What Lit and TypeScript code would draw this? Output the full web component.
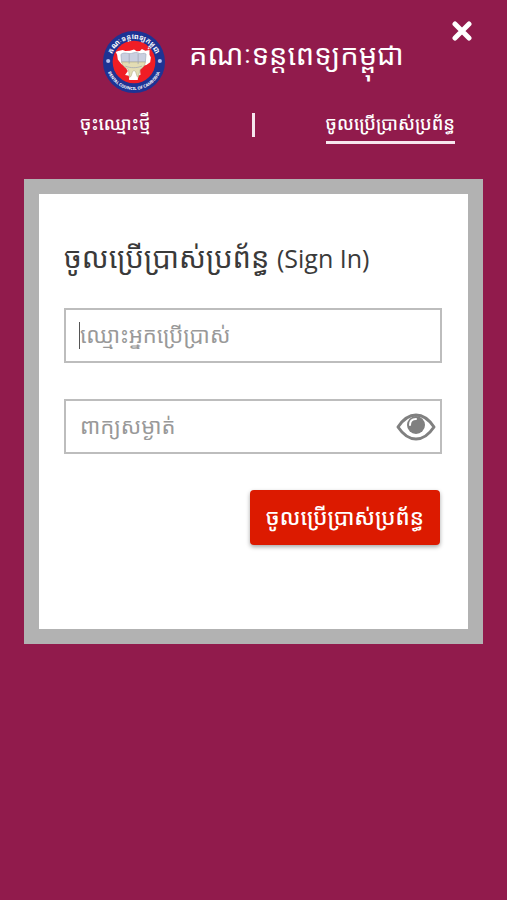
import { LitElement, html, css } from "lit";
import { customElement, state } from "lit/decorators.js";

@customElement("council-seal")
export class CouncilSeal extends LitElement {
  static styles = css`
    :host { display: block; flex: none; width: 62px; height: 62px; }
    svg { display: block; width: 100%; height: 100%; }
    text { font-family: "Noto Sans Khmer", "Noto Sans", "DejaVu Sans", sans-serif; font-weight: 700; fill: #fff; }
    .top { font-size: 21px; }
    .bottom { font-size: 12px; }
  `;
  render() {
    return html`<svg viewBox="0 0 180 180" role="img" aria-label="Dental Council of Cambodia">
      <defs>
        <path id="upper" d="M23 90a67 67 0 0 1 134 0" />
        <path id="lower" d="M9 90a81 81 0 0 0 162 0" />
      </defs>
      <circle cx="90" cy="90" r="90" fill="#1d3394" />
      <circle cx="90" cy="90" r="62" fill="#f01d25" />
      <path fill="#fff" d="M44 58l13-3 8 3 13-1 12-3 8 5 9-1 6-6 10 5 12-2v14l4 8-2 14-11 8-12 2-7 9 2 17-7 3-1 12H76l-1-12-11-2 8-12-8-12-11-8-10-13-2-14-4-8z" />
      <path fill="#c9cfe0" stroke="#a5aabb" stroke-width="2" d="M52 68c10-9 21 0 31-3s15-4 22 0 13-4 20 2l-2 23H54z" />
      <path fill="#e3ddb4" stroke="#b5b18e" stroke-width="2" d="M54 90h69c-1 12-9 17-15 22l-6 23c-6-4-5-20-12-20s-5 17-13 20l-3-23c-9-5-18-11-20-22z" />
      <path fill="none" stroke="#9ba1b2" stroke-width="2" d="M76 67v28M102 66v30M65 102c15 6 33 6 48 0" />
      <circle cx="15" cy="87" r="6" fill="#b8c1ef" />
      <circle cx="165" cy="87" r="6" fill="#b8c1ef" />
      <text class="top" text-anchor="middle"><textPath href="#upper" startOffset="50%">គណៈទន្តពេទ្យកម្ពុជា</textPath></text>
      <text class="bottom" text-anchor="middle"><textPath href="#lower" startOffset="50%">DENTAL COUNCIL OF CAMBODIA</textPath></text>
    </svg>`;
  }
}

@customElement("app-root")
export class AppRoot extends LitElement {
  static styles = css`
    :host {
      display: flex;
      flex-direction: column;
      min-height: 100vh;
      box-sizing: border-box;
      padding: 0 24px 32px;
      background: #911b4c;
      color: #fff;
      font-family: "Noto Sans Khmer", "Khmer OS Battambang", "Open Sans", "Noto Sans", sans-serif;
    }
    * { box-sizing: border-box; }
    header { position: relative; padding-top: 31px; }
    .brand { display: flex; justify-content: center; align-items: center; gap: 24px; height: 62px; }
    h1 { margin: 0; font-size: 29px; font-weight: 400; line-height: 48px; white-space: nowrap; padding-bottom: 16px; }
    .close { position: absolute; top: 19px; right: 9px; width: 24px; height: 24px; padding: 2px; border: 0; background: none; color: inherit; }
    .close svg { display: block; width: 20px; height: 20px; }
    nav { display: grid; grid-template-columns: 1fr auto 1fr; align-items: center; margin-top: 16px; height: 35px; }
    nav a { color: inherit; font-size: 18px; font-weight: 500; line-height: 28px; padding-bottom: 4px; text-decoration: none; white-space: nowrap; border-bottom: 3px solid transparent; }
    nav a:first-child { justify-self: start; margin-left: 56px; }
    nav a.current { justify-self: end; margin-right: 28px; border-color: #f6e6ee; }
    .bar { width: 3px; height: 24px; margin-bottom: 4px; background: #f6e6ee; }
    main { margin-top: 35px; border: 15px solid #b2b2b2; background: #fff; color: #3a3a3a; padding: 39px 26px 84px 25px; }
    h2 { margin: 0; height: 48px; font-size: 29px; font-weight: 400; line-height: 48px; white-space: nowrap; }
    .latin { font-family: "Open Sans", sans-serif; font-size: 25px; }
    form { display: flex; flex-direction: column; gap: 36px; margin-top: 27px; }
    .field { position: relative; }
    input { display: block; width: 100%; height: 55px; border: 2px solid #bdbdbd; border-radius: 0; padding: 0 48px 4px 14px; background: #fff; color: #333; font: inherit; font-size: 22px; outline: none; }
    input::placeholder { color: #999; opacity: 1; }
    .caret { position: absolute; left: 15px; top: 14px; width: 1px; height: 27px; background: #555; }
    .eye { position: absolute; right: 6px; top: 14px; width: 40px; height: 28px; padding: 0; border: 0; background: none; }
    .eye svg { display: block; width: 40px; height: 28px; }
    .submit { align-self: flex-end; margin-right: 2px; height: 55px; padding: 0 16px 4px; border: 0; border-radius: 4px; background: #dc1a00; color: #fff; font: inherit; font-size: 22px; font-weight: 500; line-height: 40px; white-space: nowrap; box-shadow: 0 2px 4px rgba(0, 0, 0, 0.35); }
  `;

  @state() private visible = false;

  render() {
    return html`
      <header>
        <div class="brand"><council-seal></council-seal><h1>គណៈទន្តពេទ្យកម្ពុជា</h1></div>
        <button class="close" type="button" aria-label="Close">
          <svg viewBox="0 0 20 20"><path d="M3 3l14 14M17 3L3 17" stroke="currentColor" stroke-width="5" stroke-linecap="round" /></svg>
        </button>
        <nav>
          <a href="#register">ចុះឈ្មោះថ្មី</a>
          <span class="bar"></span>
          <a class="current" href="#signin" aria-current="page">ចូលប្រើប្រាស់ប្រព័ន្ធ</a>
        </nav>
      </header>
      <main>
        <h2>ចូលប្រើប្រាស់ប្រព័ន្ធ <span class="latin">(Sign In)</span></h2>
        <form @submit=${(e: Event) => e.preventDefault()}>
          <div class="field">
            <input type="text" aria-label="ឈ្មោះអ្នកប្រើប្រាស់" placeholder="ឈ្មោះអ្នកប្រើប្រាស់" />
            <span class="caret"></span>
          </div>
          <div class="field">
            <input type=${this.visible ? "text" : "password"} aria-label="ពាក្យសម្ងាត់" placeholder="ពាក្យសម្ងាត់" />
            <button class="eye" type="button" aria-label="Show password" @click=${() => (this.visible = !this.visible)}>
              <svg viewBox="0 0 40 28">
                <path d="M2 14Q10 2 20 2T38 14Q30 26 20 26T2 14Z" fill="#fff" stroke="#808080" stroke-width="3" stroke-linejoin="round" />
                <circle cx="20" cy="12" r="9" fill="#808080" />
                <path d="M14 12q0-6 6-6" fill="none" stroke="#fff" stroke-width="2" stroke-linecap="round" />
              </svg>
            </button>
          </div>
          <button class="submit" type="submit">ចូលប្រើប្រាស់ប្រព័ន្ធ</button>
        </form>
      </main>
    `;
  }
}
